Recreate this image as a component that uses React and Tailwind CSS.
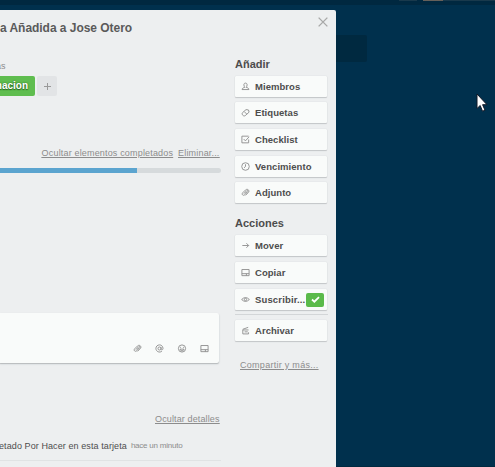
import React from "react";

function Icon({ name, className = "" }) {
  const shapes = {
    member: <path d="M5 1.2C3.9 1.2 3.2 2 3.2 3.2S4 5.5 4.2 6C3 6.3 1.2 6.7 1.2 8.4h7.6C8.8 6.7 7 6.3 5.8 6 6 5.5 6.8 4.4 6.8 3.2S6.100 1.200 5 1.200Z" />,
    label: <path d="M5.600 1.800L8.300 2.200 9 4.600 4.700 8.500Q3.700 9.200 2.500 8.500L1.500 7.500Q.8 6.200 1.700 5.200ZM3.600 4l2.800 2.800" />,
    checklist: <path d="M8.500 5v3.700H1V1.300h7.500M3 4.500l1.900 2L9 2" />,
    clock: (
      <>
        <circle cx="5" cy="5" r="4.200" />
        <path d="M5 2.500V5L3.300 6.500" />
      </>
    ),
    clip: <path d="M3.200 6.100l3-3c1-1 2.100.2 1.200 1.100L4.200 7.500c-1.700 1.700-4-.4-2.300-2.200l3-3c2.300-2.300 5.200.6 3.200 2.700L5 8.200M4.500 6.200l1.700-1.800" />,
    arrow: <path d="M1.500 5h7M6 2.500L8.500 5 6 7.500" />,
    card: <path d="M1 1.700h8v6.800H1ZM1 6.300h8M6 8.500V6.300" />,
    eye: (
      <>
        <path d="M.7 5Q5 .7 9.300 5 5 9.300.7 5Z" />
        <circle cx="5" cy="5" r="1.300" />
      </>
    ),
    archive: <path d="M8.400 4.400H2v4.400h6.400V7M1.800 3.700l6.200-2.200M4 6.500h3.500" />,
    at: (
      <>
        <circle cx="5" cy="5" r="1.700" />
        <path d="M6.700 3.300v2.600c0 1.200 2.400.8 2.200-1.200C8.600 2.300 7 1 5 1 2.600 1 1 2.800 1 5c0 3.300 3.800 5 6.600 3.200" />
      </>
    ),
    smile: (
      <>
        <circle cx="5" cy="5" r="4" />
        <path d="M3.400 3.200v1M6.600 3.200v1M2.800 5.700h4.400Q6.700 7.700 5 7.700T2.800 5.700Z" />
      </>
    ),
  };
  return (
    <svg viewBox="0 0 10 10" className={`shrink-0 fill-none stroke-[#8c8c8c] stroke-1 ${className}`}>
      {shapes[name]}
    </svg>
  );
}

function SideButton({ icon, label, className = "", tracking = "tracking-[0.05px]", checked }) {
  return (
    <button
      className={`flex h-[21px] w-[92px] shrink-0 items-center rounded-[1px] bg-[#f9fbfa] pl-[6px] text-left text-[9.5px] font-bold leading-[20px] text-[#4d4d4d] shadow-[0_1px_1px_#c3c6c8,0_0_1px_#c0c4c6] ${className}`}
    >
      <Icon name={icon} className="h-[9px] w-[9px]" />
      <span className={`ml-[5px] whitespace-nowrap pt-px ${tracking}`}>{label}</span>
      {checked && (
        <span className="ml-auto mr-[3px] flex h-[14px] w-[18px] shrink-0 items-center justify-center rounded-[2px] bg-[#5aba4a]">
          <svg viewBox="0 0 10 8" className="h-[7px] w-[9px] fill-none stroke-white stroke-2">
            <path d="M1 4l2.700 2.500L9 1.300" />
          </svg>
        </span>
      )}
    </button>
  );
}

export default function App() {
  return (
    <div className="relative h-[467px] w-[495px] overflow-hidden bg-[#00304d] font-['Liberation_Sans',Arial,sans-serif]">
      <header className="flex h-[5px] items-start bg-[#002840] pl-[399px]">
        <span className="h-px w-[18px] bg-[#19394c]" />
        <span className="ml-[6px] h-px w-[20px] bg-[#66605a]" />
        <span className="h-px flex-1 bg-[#19394c]" />
      </header>
      <div className="absolute left-[330px] top-[35px] h-[27px] w-[37px] rounded-[2px] bg-[#002940]" />
      <div className="absolute bottom-0 left-[336px] right-0 h-px bg-[#002940]" />

      <section className="relative mt-[5px] flex h-[457px] w-[336px] rounded-tr-[2px] bg-[#edeff0]">
        <main className="flex w-[221px] shrink-0 flex-col overflow-hidden">
          <h1 className="mt-[10px] h-[16px] whitespace-nowrap text-[12px] font-bold leading-[16px] tracking-[-0.04px] text-[#5a5a5a]">
            a Añadida a Jose Otero
          </h1>
          <p className="-ml-[4px] mt-[24px] h-[12px] text-[9px] leading-[12px] text-[#8c8c8c]">as</p>
          <div className="mt-[4px] flex h-[20px] shrink-0 gap-[2px]">
            <div className="flex w-[35px] justify-end rounded-r-[2px] bg-[#5fbd4f] pr-[7px] text-[10px] font-bold leading-[20px] text-white [text-shadow:0_0_2px_#28661e,0_1px_1px_#28661e]">
              macion
            </div>
            <button className="flex w-[20px] items-center justify-center rounded-[2px] bg-[#e2e4e6]">
              <svg viewBox="0 0 7 7" className="h-[7px] w-[7px] stroke-[#999] stroke-1">
                <path d="M0 3.500h7M3.500 0v7" />
              </svg>
            </button>
          </div>
          <div className="mt-[51px] flex h-[12px] justify-end gap-[5px] whitespace-nowrap pr-[1.5px] text-[9px] leading-[12px] text-[#8c8c8c] underline">
            <a className="tracking-[0.17px]">Ocultar elementos completados</a>
            <a className="tracking-[0.17px]">Eliminar...</a>
          </div>
          <div className="mt-[9px] h-[5px] shrink-0 overflow-hidden rounded-r-[3px] bg-[#d6dadc]">
            <div className="h-full w-[137px] bg-[#5ba4cf]" />
          </div>
          <div className="mr-[2px] mt-[140px] flex h-[50px] shrink-0 items-end justify-end gap-[13px] rounded-r-[2px] bg-[#f9fbfa] pb-[10px] pr-[10px] shadow-[0_1px_1px_#b8bcbe,0_1px_2px_#d2d5d7]">
            <Icon name="clip" className="h-[9px] w-[9px]" />
            <Icon name="at" className="h-[9px] w-[9px]" />
            <Icon name="smile" className="h-[9px] w-[10px]" />
            <Icon name="card" className="h-[9px] w-[9px]" />
          </div>
          <div className="mt-[50px] h-[12px] pr-[1.5px] text-right text-[9px] leading-[12px] text-[#8c8c8c] underline">
            <a className="tracking-[0.12px]">Ocultar detalles</a>
          </div>
          <div className="mt-[15px] flex h-[21px] whitespace-nowrap border-b border-[#e0e3e4] text-[9px] leading-[12px] text-[#4d4d4d]">
            <span className="-ml-px tracking-[0.09px]">etado Por Hacer en esta tarjeta</span>
            <span className="ml-[4px] text-[8px] tracking-[-0.22px] text-[#8c8c8c]">hace un minuto</span>
          </div>
        </main>

        <aside className="ml-[14px] flex w-[93px] flex-col">
          <button aria-label="Cerrar" className="ml-[83px] mt-[7px] h-[10px] w-[10px]">
            <svg viewBox="0 0 11 11" className="h-[10px] w-[10px] stroke-[#a8a8a8] stroke-[1.500]">
              <path d="M.7.700l9.600 9.600M10.300.700L.7 10.300" />
            </svg>
          </button>
          <h2 className="mt-[30px] h-[14px] text-[11px] font-bold leading-[14px] text-[#4d4d4d]">Añadir</h2>
          <SideButton icon="member" label="Miembros" className="mt-[5px]" />
          <SideButton icon="label" label="Etiquetas" className="mt-[5px]" />
          <SideButton icon="checklist" label="Checklist" className="mt-[6px]" />
          <SideButton icon="clock" label="Vencimiento" className="mt-[6px]" />
          <SideButton icon="clip" label="Adjunto" className="mt-[5px]" />
          <h2 className="mt-[13px] h-[14px] text-[11px] font-bold leading-[14px] text-[#4d4d4d]">Acciones</h2>
          <SideButton icon="arrow" label="Mover" className="mt-[5px]" />
          <SideButton icon="card" label="Copiar" className="mt-[6px]" />
          <SideButton icon="eye" label="Suscribir..." className="mt-[6px]" tracking="tracking-[0.15px]" checked />
          <hr className="mt-[4px] h-px shrink-0 border-0 bg-[#d3d6d8]" />
          <SideButton icon="archive" label="Archivar" className="mt-[5px]" />
          <a className="ml-[5px] mt-[18px] whitespace-nowrap text-[9px] leading-[12px] tracking-[0.28px] text-[#8c8c8c] underline">
            Compartir y más...
          </a>
        </aside>
      </section>

      <svg viewBox="0 0 13 20" className="absolute left-[476px] top-[93px] h-[20px] w-[13px]">
        <path d="M1 1v14.500l3.200-3 2.300 5.700 2.500-1-2.400-5.500H11Z" className="fill-white stroke-[#111827] stroke-1" />
      </svg>
    </div>
  );
}
